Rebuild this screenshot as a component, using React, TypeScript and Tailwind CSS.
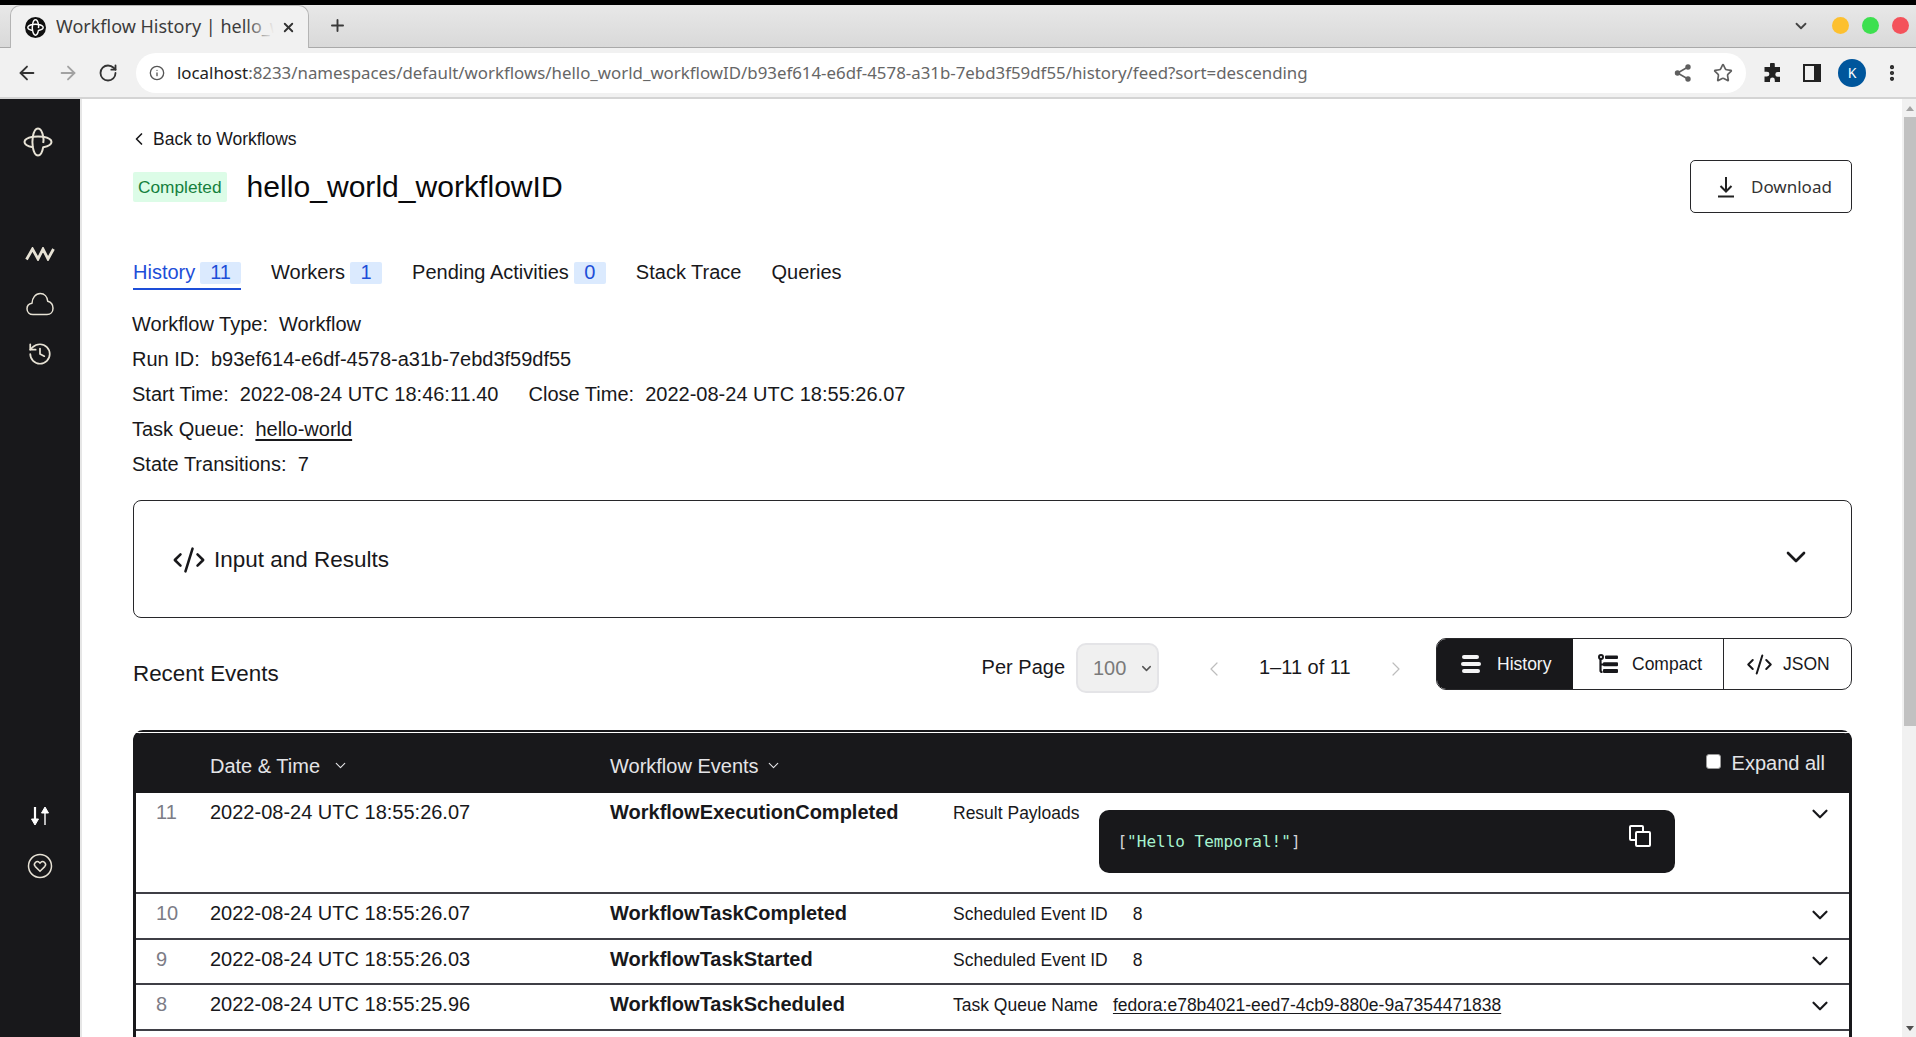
import React from "react";
import { ArrowLeft, ArrowRight, RotateCw, Info, Star, ChevronDown, ChevronLeft, ChevronRight, Plus, X, History as HistoryIcon, CodeXml, EllipsisVertical } from "lucide-react";

const sans = "font-['Liberation_Sans',Arial,sans-serif]";

function TemporalMark({ className, color = "currentColor", sw = 2 }: { className?: string; color?: string; sw?: number }) {
  return (
    <svg viewBox="0 0 30 30" fill="none" stroke={color} strokeWidth={sw} strokeLinejoin="round" className={className}>
      <path d="M15 1.500C18 1.500 19.500 6 20.200 9.800 24 10.500 28.500 12 28.500 15 28.500 18 24 19.500 20.200 20.200 19.500 24 18 28.500 15 28.500 12 28.500 10.500 24 9.800 20.200 6 19.500 1.500 18 1.500 15 1.500 12 6 10.500 9.800 9.800 10.500 6 12 1.500 15 1.500Z" />
      <path d="M9.800 9.800C13 9.300 17 9.300 20.200 9.800 20.700 12 20.700 14 20.200 16M9.800 9.800C9.300 13 9.300 17 9.800 20.200" />
    </svg>
  );
}

function BrowserChrome() {
  return (
    <div className="shrink-0">
      <div className="h-[5px] bg-black" />
      <div className="h-[43px] flex items-end bg-linear-to-b from-[#e8e8e8] to-[#d9d9d9] border-b border-[#a9a9a9] pl-[10px] font-['Noto_Sans',sans-serif]">
        <div className="relative h-[43px] w-[299px] -mb-px bg-[#f1f1f1] rounded-t-[10px] border border-b-0 border-[#b4b4b4] flex items-center pl-[14px] pr-[12px]">
          <div className="w-[21px] h-[21px] rounded-full bg-[#111] flex items-center justify-center shrink-0">
            <TemporalMark className="w-[17px] h-[17px]" color="#fff" sw={2.6} />
          </div>
          <span className="relative ml-[10px] -mt-[2px] text-[18px] text-[#3c3c3c] whitespace-nowrap overflow-hidden w-[218px]">
            Workflow History | hello_workflow
            <span className="absolute right-0 top-0 bottom-0 w-[28px] bg-linear-to-r from-transparent to-[#f1f1f1]" />
          </span>
          <X size={15} strokeWidth={3} className="ml-auto text-[#333] shrink-0" />
        </div>
        <div className="h-[43px] flex items-center ml-[19px]">
          <Plus size={19} strokeWidth={2.4} className="text-[#3a3a3a]" />
        </div>
        <div className="ml-auto h-[43px] flex items-center pr-[7px]">
          <ChevronDown size={18} strokeWidth={2.4} className="text-[#444] mr-[22px]" />
          <span className="w-[17px] h-[17px] rounded-full bg-[#fdc02f] mr-[13px]" />
          <span className="w-[17px] h-[17px] rounded-full bg-[#3de04f] mr-[13px]" />
          <span className="w-[17px] h-[17px] rounded-full bg-[#f4525b]" />
        </div>
      </div>
      <div className="h-[51px] bg-[#f1f1f1] border-b-2 border-[#d4d4d4] flex items-center font-['Noto_Sans',sans-serif]">
        <ArrowLeft size={22} strokeWidth={2} className="ml-[16px] text-[#333]" />
        <ArrowRight size={22} strokeWidth={2} className="ml-[19px] text-[#a2a2a2]" />
        <RotateCw size={20} strokeWidth={2.2} className="ml-[19px] text-[#333]" />
        <div className="ml-[18px] h-[40px] w-[1610px] bg-white rounded-full flex items-center pl-[13px] pr-[13px]">
          <Info size={16} className="text-[#555]" />
          <span className="ml-[12px] text-[16.85px] whitespace-nowrap text-[#666]"><span className="text-[#222]">localhost</span>:8233/namespaces/default/workflows/hello_world_workflowID/b93ef614-e6df-4578-a31b-7ebd3f59df55/history/feed?sort=descending</span>
          <svg viewBox="0 0 20 20" className="ml-auto w-[20px] h-[20px] text-[#5f5f5f]" fill="currentColor" stroke="currentColor" strokeWidth="1.6">
            <circle cx="15" cy="4" r="1.9" /><circle cx="4.500" cy="10" r="1.9" /><circle cx="15" cy="16" r="1.9" />
            <path d="M15 4 4.500 10 15 16" fill="none" />
          </svg>
          <Star size={20} strokeWidth={2} className="ml-[20px] text-[#5f5f5f]" />
        </div>
        <svg viewBox="0 0 20 20" className="ml-[17px] w-[20px] h-[20px] text-[#222]" fill="currentColor">
          <path d="M7 1.500a2.400 2.400 0 0 1 4.800 0V4H17v5h-2.300a2.400 2.400 0 0 0 0 4.800H17V19h-5.200v-2a2.400 2.400 0 0 0-4.800 0v2H1.500v-5.500H4a2.400 2.400 0 0 0 0-4.800H1.500V4H7z" />
        </svg>
        <svg viewBox="0 0 18 18" className="ml-[20px] w-[18px] h-[18px]" fill="none">
          <rect x="1" y="1" width="16" height="16" stroke="#222" strokeWidth="2" />
          <rect x="11" y="1" width="6" height="16" fill="#222" />
        </svg>
        <div className="ml-[17px] w-[28px] h-[28px] rounded-full bg-[#00569c] text-white text-[14px] flex items-center justify-center">K</div>
        <EllipsisVertical size={20} strokeWidth={3} className="ml-[16px] text-[#222]" />
      </div>
    </div>
  );
}

function Sidebar() {
  const c = "text-[#e7e2d5]";
  return (
    <aside className="w-[82px] shrink-0 bg-[#18181b] border-r-2 border-[#e6e6e6] flex flex-col items-center">
      <TemporalMark className={`w-[30px] h-[30px] mt-[28px] -ml-[5px] ${c}`} />
      <svg viewBox="0 0 30 14" fill="none" stroke="currentColor" strokeWidth="2.800" className={`w-[30px] h-[14px] mt-[90px] ${c}`}>
        <path d="M1.500 12.500 7.500 2l5.500 10 5-10 5 10 5.500-10" />
      </svg>
      <svg viewBox="0 0 28 24" fill="none" stroke="currentColor" strokeWidth="1.500" strokeLinejoin="round" className={`w-[28px] h-[24px] mt-[31px] ${c}`}>
        <path d="M7 22.500C3.500 22.500 1 20 1 16.800 1 13.800 3.200 11.600 6 11.200 6.200 6 9.500 1.500 14.200 1.500 18.500 1.500 21.300 4.800 21.700 9.200 24.800 10 27 12.800 27 16.200 27 20 24.500 22.500 21 22.500Z" />
      </svg>
      <HistoryIcon size={26} strokeWidth={1.6} className={`mt-[25px] ${c}`} />
      <div className={`mt-auto flex flex-col items-center mb-[158px] ${c}`}>
        <svg viewBox="0 0 20 20" className="w-[20px] h-[20px] text-white" fill="currentColor" stroke="currentColor">
          <path d="M5 1v13" strokeWidth="2.200" fill="none" />
          <path d="M1.500 13h7L5 19z" strokeWidth="1" strokeLinejoin="round" />
          <path d="M15 7v12" strokeWidth="1.400" fill="none" />
          <path d="M11.500 7h7L15 1z" strokeWidth="1" strokeLinejoin="round" />
        </svg>
        <svg viewBox="0 0 26 26" fill="none" stroke="currentColor" strokeWidth="1.500" className="w-[26px] h-[26px] mt-[27px]">
          <circle cx="13" cy="13" r="11.500" />
          <path d="M13 18.200 8.300 13.600a2.900 2.900 0 0 1 4.100-4.100l.6.6.6-.6a2.900 2.900 0 0 1 4.100 4.100z" />
        </svg>
      </div>
    </aside>
  );
}

function Tab({ label, count, active }: { label: string; count?: number; active?: boolean }) {
  return (
    <div className={`h-[28px] flex items-start gap-[5px] pb-[4px] border-b-2 text-[20px] leading-[20px] ${active ? "border-[#1d4ed8] text-[#1d4ed8]" : "border-transparent text-[#18181b]"}`}>
      <span>{label}</span>
      {count !== undefined && (
        <span className="h-[22px] min-w-[32px] px-[10px] pb-[2px] rounded-[2px] bg-[#dbeafe] text-[#1d4ed8] flex items-center justify-center">{count}</span>
      )}
    </div>
  );
}

function Meta({ children }: { children: React.ReactNode }) {
  return <div className="h-[35px] -ml-px pb-[2px] flex items-center text-[20px] text-[#18181b] whitespace-pre">{children}</div>;
}

function Row({ n, date, event, label, h, children }: { n: number; date: string; event: string; label: string; h: string; children?: React.ReactNode }) {
  return (
    <div className={`${h} pt-px flex items-start border-b-2 border-[#3f3f46] text-[20px] text-[#18181b] shrink-0`}>
      <div className="w-[74px] pl-[20px] text-[#7c7c86] leading-[36px]">{n}</div>
      <div className="w-[400px] leading-[36px] whitespace-nowrap">{date}</div>
      <div className="w-[343px] leading-[36px] font-bold whitespace-nowrap">{event}</div>
      <div className="flex-1 flex items-start text-[17.5px] leading-[38px] whitespace-nowrap">
        <span>{label}</span>
        {children}
      </div>
      <ChevronDown size={26} strokeWidth={2} className="mr-[16px] mt-[7px] shrink-0 text-[#18181b]" />
    </div>
  );
}

export default function App() {
  return (
    <div className={`w-[1916px] h-[1037px] overflow-hidden flex flex-col bg-white ${sans}`}>
      <BrowserChrome />
      <div className="flex-1 flex min-h-0">
        <Sidebar />
        <main className="flex-1 min-w-0 pl-[51px] pr-[50px] pt-[28px] overflow-hidden">
          <div className="h-[24px] flex items-center text-[17.5px] text-[#18181b]">
            <ChevronLeft size={20} strokeWidth={2} className="-ml-[4px] mr-[4px]" />
            Back to Workflows
          </div>
          <div className="mt-[9px] h-[53px] flex items-center">
            <span className="h-[30px] px-[5px] pt-[3px] rounded-[2px] bg-[#dcfce7] text-[#15803d] text-[17.3px] flex items-center">Completed</span>
            <h1 className="ml-[20px] text-[30.1px] text-[#09090b]">hello_world_workflowID</h1>
            <button className="ml-auto w-[162px] h-[53px] rounded-[5px] border border-[#27272a] flex items-center pl-[26px] gap-[16px] font-['Noto_Sans',sans-serif] text-[17px] text-[#333]">
              <svg viewBox="0 0 18 22" fill="none" stroke="#222" strokeWidth="2" className="w-[18px] h-[22px]">
                <path d="M9 1v14M3.500 10 9 15.500 14.500 10M1 20.500h16" />
              </svg>
              Download
            </button>
          </div>
          <div className="mt-[49px] flex gap-[30px]">
            <Tab label="History" count={11} active />
            <Tab label="Workers" count={1} />
            <Tab label="Pending Activities" count={0} />
            <Tab label="Stack Trace" />
            <Tab label="Queries" />
          </div>
          <div className="mt-[17px]">
            <Meta>Workflow Type:  Workflow</Meta>
            <Meta>Run ID:  b93ef614-e6df-4578-a31b-7ebd3f59df55</Meta>
            <Meta>Start Time:  2022-08-24 UTC 18:46:11.40<span className="ml-[30px]">Close Time:  2022-08-24 UTC 18:55:26.07</span></Meta>
            <Meta>Task Queue:  <span className="underline underline-offset-[3px]">hello-world</span></Meta>
            <Meta>State Transitions:  7</Meta>
          </div>
          <div className="mt-[18px] h-[118px] pt-[2px] rounded-[8px] border border-[#27272a] flex items-center pl-[38px] pr-[39px]">
            <CodeXml size={34} strokeWidth={1.8} className="text-[#18181b]" />
            <span className="ml-[8px] text-[22.5px] text-[#18181b]">Input and Results</span>
            <ChevronDown size={32} strokeWidth={2} className="ml-auto -mt-[6px] text-[#18181b]" />
          </div>
          <div className="mt-[20px] h-[55px] flex items-start">
            <span className="mt-[23px] text-[22.4px] leading-[26px] text-[#18181b]">Recent Events</span>
            <span className="ml-auto mt-[16px] text-[20px] leading-[26px] text-[#18181b]">Per Page</span>
            <div className="ml-[11px] mt-[5px] w-[83px] h-[50px] rounded-[10px] bg-[#f0f0f0] border-2 border-[#e4e4e7] flex items-center pl-[15px] text-[20px] text-[#7a7a7a]">
              100
              <ChevronDown size={15} strokeWidth={2.400} className="ml-[13px] text-[#555]" />
            </div>
            <ChevronLeft size={24} strokeWidth={1.2} className="ml-[43px] mt-[19px] text-[#bdbdbd]" />
            <span className="ml-[33px] mt-[16px] text-[20px] leading-[26px] text-[#18181b] w-[91px] whitespace-nowrap">1–11 of 11</span>
            <ChevronRight size={24} strokeWidth={1.2} className="ml-[34px] mt-[19px] text-[#bdbdbd]" />
            <div className="ml-[28px] w-[416px] h-[52px] rounded-[10px] border border-[#27272a] flex overflow-hidden text-[17.5px] text-[#18181b]">
              <div className="w-[136px] bg-[#18181b] text-[#f4f4f5] flex items-center pl-[24px] gap-[16px]">
                <svg viewBox="0 0 20 18" fill="#f4f4f5" className="w-[20px] h-[18px]">
                  <rect x="1" y="0" width="17" height="4" rx="2" /><rect x="0" y="7" width="20" height="4" rx="2" /><rect x="1" y="14" width="18" height="4" rx="2" />
                </svg>
                History
              </div>
              <div className="w-[151px] border-r border-[#27272a] flex items-center pl-[25px] gap-[14px]">
                <svg viewBox="0 0 20 20" className="w-[20px] h-[20px]" fill="none" stroke="#18181b">
                  <circle cx="3" cy="3" r="2" strokeWidth="2" />
                  <path d="M2.500 5v11.500c0 1 .500 1.500 2 1.500M2.500 10.500h3" strokeWidth="2.200" />
                  <rect x="7" y="1.500" width="13" height="3.600" rx="1" fill="#18181b" stroke="none" />
                  <rect x="5" y="8.300" width="15" height="4" rx="1" fill="#18181b" stroke="none" />
                  <rect x="5" y="15" width="15" height="4" rx="1" fill="#18181b" stroke="none" />
                </svg>
                Compact
              </div>
              <div className="flex-1 flex items-center pl-[22px] gap-[10px]">
                <CodeXml size={27} strokeWidth={1.8} />
                JSON
              </div>
            </div>
          </div>
          <div className="mt-[37px] rounded-t-[10px] border-t-2 border-x-[3px] border-[#18181b] flex flex-col">
            <div className="h-px bg-white rounded-t-[10px] -mx-px" />
            <div className="h-[60px] bg-[#18181b] rounded-t-[8px] -mx-[3px] pl-[3px] text-[#e4e4e7] text-[20px] flex items-center pt-[5px]">
              <div className="w-[74px]" />
              <div className="w-[400px] flex items-center">Date &amp; Time<ChevronDown size={17} strokeWidth={1.6} className="ml-[12px]" /></div>
              <div className="flex items-center">Workflow Events<ChevronDown size={17} strokeWidth={1.6} className="ml-[6px]" /></div>
              <div className="ml-auto mr-[27px] flex items-center -mt-[5px]">
                <span className="w-[15px] h-[15px] rounded-[3px] bg-white border border-[#999] mr-[11px] -mt-[3px]" />
                Expand all
              </div>
            </div>
            <Row n={11} date="2022-08-24 UTC 18:55:26.07" event="WorkflowExecutionCompleted" label="Result Payloads" h="h-[101px]">
              <div className="ml-[20px] mt-[16px] w-[576px] h-[63px] rounded-[10px] bg-[#18181b] flex items-center pl-[18px] pr-[24px] font-['DejaVu_Sans_Mono',monospace] text-[16px] leading-[20px] text-[#a7f3d0]">
                <span><span className="text-[#d4d4d8]">[</span>"Hello Temporal!"<span className="text-[#d4d4d8]">]</span></span>
                <svg viewBox="0 0 22 22" fill="none" stroke="#fff" strokeWidth="2" className="ml-auto -mt-[12px] w-[22px] h-[22px]">
                  <path d="M7 15H2a1 1 0 0 1-1-1V2a1 1 0 0 1 1-1h11a1 1 0 0 1 1 1v5" />
                  <rect x="7" y="7" width="14" height="14" rx="1" />
                </svg>
              </div>
            </Row>
            <Row n={10} date="2022-08-24 UTC 18:55:26.07" event="WorkflowTaskCompleted" label="Scheduled Event ID" h="h-[46px]">
              <span className="ml-[25px]">8</span>
            </Row>
            <Row n={9} date="2022-08-24 UTC 18:55:26.03" event="WorkflowTaskStarted" label="Scheduled Event ID" h="h-[45px]">
              <span className="ml-[25px]">8</span>
            </Row>
            <Row n={8} date="2022-08-24 UTC 18:55:25.96" event="WorkflowTaskScheduled" label="Task Queue Name" h="h-[46px]">
              <span className="ml-[15px] underline underline-offset-[2px]">fedora:e78b4021-eed7-4cb9-880e-9a7354471838</span>
            </Row>
            <div className="h-[60px]" />
          </div>
        </main>
        <div className="w-[14px] shrink-0 bg-[#f1f1f1] flex flex-col pl-[2px]">
          <div className="h-[18px] flex items-center justify-center">
            <div className="w-0 h-0 border-x-[4px] border-x-transparent border-b-[5px] border-b-[#a3a3a3]" />
          </div>
          <div className="h-[609px] bg-[#c1c1c1]" />
          <div className="mt-auto h-[18px] flex items-center justify-center">
            <div className="w-0 h-0 border-x-[4px] border-x-transparent border-t-[5px] border-t-[#505050]" />
          </div>
        </div>
      </div>
    </div>
  );
}
